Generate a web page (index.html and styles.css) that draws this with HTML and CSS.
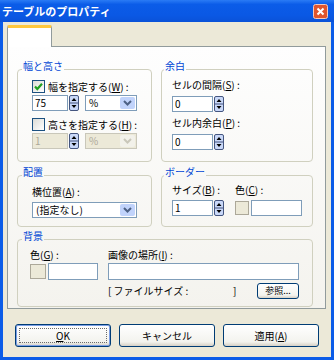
FILE: index.html
```html
<!DOCTYPE html>
<html lang="ja">
<head>
    <meta charset="UTF-8">
    <title>テーブルのプロパティ</title>
    <link rel="stylesheet" href="styles.css">
</head>
<body>
    <div class="window">
        <div class="titlebar">
            <span class="title">テーブルのプロパティ</span>
            <svg class="close-btn" width="15" height="15" viewBox="0 0 15 15">
                <rect x="0.5" y="0.5" width="14" height="14" rx="2" fill="#E0552D" stroke="#F6C8B8"/>
                <path d="M4.5 4.5 L10.5 10.5 M10.5 4.5 L4.5 10.5" stroke="#fff" stroke-width="2"/>
            </svg>
        </div>

        <div class="frame">
            <div class="client">
                <div class="tabs">
                    <div class="tab"></div>
                </div>

                <div class="panel">
                    <div class="group-grid">
                        <!-- width and height -->
                        <fieldset class="group">
                            <legend>幅と高さ</legend>
                            <div class="size-body">
                                <div class="check-row">
                                    <span class="checkbox">
                                        <svg width="11" height="11" viewBox="0 0 11 11"><path d="M2 5.5 L4.3 8 L9 2.8" fill="none" stroke="#21A121" stroke-width="2.2"/></svg>
                                    </span>
                                    <span>幅を指定する(<u>W</u>) :</span>
                                </div>
                                <div class="control-row">
                                    <div class="spin-input">
                                        <span class="textbox num-w">75</span>
                                        <svg class="spin" width="10" height="16" viewBox="0 0 10 16"><rect x="0.5" y="0.5" width="9" height="15" rx="1.5" fill="#C9D8F8" stroke="#44557F"/><line x1="1" y1="8" x2="9" y2="8" stroke="#44557F"/><path d="M2.5 6 L5 3 L7.5 6Z M2.5 10 L5 13 L7.5 10Z" fill="#000"/></svg>
                                    </div>
                                    <div class="select unit-select">
                                        <span class="select-text">%</span>
                                        <span class="drop"><svg width="9" height="6" viewBox="0 0 9 6"><path d="M1 1 L4.5 4.5 L8 1" fill="none" stroke="#4D6185" stroke-width="2"/></svg></span>
                                    </div>
                                </div>
                                <div class="check-row second">
                                    <span class="checkbox"></span>
                                    <span>高さを指定する(<u>H</u>) :</span>
                                </div>
                                <div class="control-row disabled">
                                    <div class="spin-input">
                                        <span class="textbox num-w">1</span>
                                        <svg class="spin" width="10" height="16" viewBox="0 0 10 16"><rect x="0.5" y="0.5" width="9" height="15" rx="1.5" fill="#C9D8F8" stroke="#44557F"/><line x1="1" y1="8" x2="9" y2="8" stroke="#44557F"/><path d="M2.5 6 L5 3 L7.5 6Z M2.5 10 L5 13 L7.5 10Z" fill="#000"/></svg>
                                    </div>
                                    <div class="select unit-select">
                                        <span class="select-text">%</span>
                                        <span class="drop"><svg width="9" height="6" viewBox="0 0 9 6"><path d="M1 1 L4.5 4.5 L8 1" fill="none" stroke="#C9C7BA" stroke-width="2"/></svg></span>
                                    </div>
                                </div>
                            </div>
                        </fieldset>

                        <!-- margins -->
                        <fieldset class="group right">
                            <legend>余白</legend>
                            <div class="margin-body">
                                <div class="field-label first">セルの間隔(<u>S</u>) :</div>
                                <div class="spin-input">
                                    <span class="textbox num-m">0</span>
                                    <svg class="spin" width="10" height="16" viewBox="0 0 10 16"><rect x="0.5" y="0.5" width="9" height="15" rx="1.5" fill="#C9D8F8" stroke="#44557F"/><line x1="1" y1="8" x2="9" y2="8" stroke="#44557F"/><path d="M2.5 6 L5 3 L7.5 6Z M2.5 10 L5 13 L7.5 10Z" fill="#000"/></svg>
                                </div>
                                <div class="field-label">セル内余白(<u>P</u>) :</div>
                                <div class="spin-input">
                                    <span class="textbox num-m">0</span>
                                    <svg class="spin" width="10" height="16" viewBox="0 0 10 16"><rect x="0.5" y="0.5" width="9" height="15" rx="1.5" fill="#C9D8F8" stroke="#44557F"/><line x1="1" y1="8" x2="9" y2="8" stroke="#44557F"/><path d="M2.5 6 L5 3 L7.5 6Z M2.5 10 L5 13 L7.5 10Z" fill="#000"/></svg>
                                </div>
                            </div>
                        </fieldset>

                        <!-- alignment -->
                        <fieldset class="group">
                            <legend>配置</legend>
                            <div class="align-body">
                                <div class="field-label">横位置(<u>A</u>) :</div>
                                <div class="select align-select">
                                    <span class="select-text">(指定なし)</span>
                                    <span class="drop"><svg width="9" height="6" viewBox="0 0 9 6"><path d="M1 1 L4.5 4.5 L8 1" fill="none" stroke="#4D6185" stroke-width="2"/></svg></span>
                                </div>
                            </div>
                        </fieldset>

                        <!-- border -->
                        <fieldset class="group right">
                            <legend>ボーダー</legend>
                            <div class="border-body">
                                <div class="col">
                                    <div class="field-label">サイズ(<u>B</u>) :</div>
                                    <div class="spin-input">
                                        <span class="textbox num-m">1</span>
                                        <svg class="spin" width="10" height="16" viewBox="0 0 10 16"><rect x="0.5" y="0.5" width="9" height="15" rx="1.5" fill="#C9D8F8" stroke="#44557F"/><line x1="1" y1="8" x2="9" y2="8" stroke="#44557F"/><path d="M2.5 6 L5 3 L7.5 6Z M2.5 10 L5 13 L7.5 10Z" fill="#000"/></svg>
                                    </div>
                                </div>
                                <div class="col color-col">
                                    <div class="field-label">色(<u>C</u>) :</div>
                                    <div class="color-row">
                                        <span class="swatch"></span>
                                        <span class="textbox color-text"></span>
                                    </div>
                                </div>
                            </div>
                        </fieldset>
                    </div>

                    <!-- background -->
                    <fieldset class="group bg-group">
                        <legend>背景</legend>
                        <div class="bg-body">
                            <div class="col bg-color">
                                <div class="field-label">色(<u>G</u>) :</div>
                                <div class="color-row">
                                    <span class="swatch big"></span>
                                    <span class="textbox bg-text"></span>
                                </div>
                            </div>
                            <div class="col bg-image">
                                <div class="field-label">画像の場所(<u>I</u>) :</div>
                                <span class="textbox image-path"></span>
                                <div class="file-row">
                                    <span class="file-size">[ ファイルサイズ :</span>
                                    <span>]</span>
                                    <span class="btn small-btn">参照...</span>
                                </div>
                            </div>
                        </div>
                    </fieldset>
                </div>

                <div class="buttons">
                    <span class="btn default"><span class="focus"><u>O</u>K</span></span>
                    <span class="btn">キャンセル</span>
                    <span class="btn">適用(<u>A</u>)</span>
                </div>
            </div>
        </div>
    </div>
</body>
</html>
```

FILE: styles.css
```css
* {
    margin: 0;
    padding: 0;
    box-sizing: border-box;
}

body {
    width: 334px;
    height: 360px;
    overflow: hidden;
    font-family: "Noto Sans CJK JP", "Liberation Sans", sans-serif;
    font-size: 10px;
    line-height: 12px;
    color: #000;
    background: #0B5CE8;
}

u {
    text-decoration: underline;
    text-underline-offset: 1px;
}

.window {
    width: 334px;
    height: 360px;
    display: flex;
    flex-direction: column;
}

/* title bar */
.titlebar {
    height: 22px;
    display: flex;
    align-items: center;
    justify-content: space-between;
    padding: 0 6px 0 2px;
    background: linear-gradient(#2A7BF5 0%, #0B5CE8 20%, #0A58E4 70%, #0A52D8 100%);
}

.title {
    color: #fff;
    font-size: 11px;
    font-weight: bold;
    line-height: 14px;
}

.frame {
    flex: 1;
    padding: 0 3px 3px;
    background: #0B5CE8;
}

.client {
    height: 335px;
    display: flex;
    flex-direction: column;
    padding: 3px 5px 10px 4px;
    background: #ECE9D8;
}

/* tab */
.tabs {
    display: flex;
    height: 21px;
}

.tab {
    position: relative;
    z-index: 1;
    width: 45px;
    height: 22px;
    background: #fff;
    border: 1px solid #919B9C;
    border-top: 3px solid #FFC73C;
    border-bottom: none;
    border-radius: 2px 2px 0 0;
}

.panel {
    height: 263px;
    border: 1px solid #919B9C;
    background: linear-gradient(#FEFEFE, #F4F3EE);
    padding: 13px 12px 0 9px;
}

.group-grid {
    display: grid;
    grid-template-columns: 135px 152px;
    column-gap: 9px;
    row-gap: 4px;
}

/* group boxes */
.group {
    border: 1px solid #D0D0BF;
    border-radius: 4px;
    padding: 0 4px;
    min-width: 0;
}

.group.right {
    padding: 0 4px 0 2px;
}

.group legend {
    color: #0046D5;
    line-height: 12px;
    padding: 0 1px 6px;
}

.size-body {
    padding: 0 0 12px 10px;
}

.margin-body {
    padding: 0 0 0 8px;
}

.align-body {
    padding: 0 0 8px 10px;
}

.border-body {
    display: flex;
    padding: 0 0 0 8px;
}

.bg-group {
    margin-top: 3px;
}

.bg-body {
    display: flex;
    gap: 10px;
    padding: 0 0 7px 8px;
}

/* rows */
.check-row {
    display: flex;
    align-items: center;
    gap: 3px;
    height: 13px;
    margin-top: 2px;
}

.check-row.second {
    margin-top: 7px;
}

.control-row {
    display: flex;
    gap: 6px;
    margin-top: 2px;
}

.field-label {
    height: 12px;
    white-space: nowrap;
}

.margin-body .field-label {
    margin-top: 5px;
}

.margin-body .field-label.first {
    margin-top: 1px;
}

.margin-body .spin-input {
    margin-top: 5px;
}

.align-body .field-label {
    margin-top: 2px;
}

.border-body .spin-input,
.border-body .color-row {
    margin-top: 4px;
}

.color-col {
    margin-left: 11px;
}

.bg-body .field-label {
    margin-top: 1px;
}

.bg-body .color-row,
.bg-body .image-path {
    margin-top: 2px;
}

/* controls */
.checkbox {
    width: 13px;
    height: 13px;
    display: flex;
    align-items: center;
    justify-content: center;
    border: 1px solid #1C5180;
    background: linear-gradient(135deg, #DCDCD7, #FFFFFF);
}

.textbox {
    display: block;
    height: 16px;
    border: 1px solid #7F9DB9;
    background: #fff;
    padding-left: 2px;
    line-height: 14px;
}

.spin-input {
    display: flex;
    gap: 1px;
}

.num-w {
    width: 36px;
}

.num-m {
    width: 41px;
}

.select {
    display: flex;
    align-items: center;
    height: 16px;
    border: 1px solid #7F9DB9;
    background: #fff;
    padding: 0 1px 0 0;
}

.unit-select {
    width: 52px;
}

.align-select {
    width: 105px;
    margin-top: 4px;
}

.select-text {
    flex: 1;
    padding-left: 3px;
    line-height: 14px;
}

.drop {
    width: 15px;
    height: 12px;
    display: flex;
    align-items: center;
    justify-content: center;
    background: #C1D3FB;
    border-radius: 2px;
}

.disabled .textbox,
.disabled .select {
    background: #ECE9D8;
    color: #ACA899;
    border-color: #C9C7BA;
}

.disabled .drop {
    background: #F2F1EA;
}

.color-row {
    display: flex;
    align-items: center;
    gap: 2px;
}

.swatch {
    width: 14px;
    height: 14px;
    border: 1px solid #ACA899;
    background: #ECE9D8;
}

.swatch.big {
    width: 16px;
    height: 15px;
}

.color-text {
    width: 51px;
}

.bg-color {
    width: 68px;
}

.bg-text {
    width: 50px;
    height: 17px;
}

.bg-image {
    width: 191px;
}

.image-path {
    width: 191px;
    height: 17px;
}

.file-row {
    display: flex;
    align-items: center;
    margin-top: 3px;
}

.file-size {
    width: 125px;
}

/* buttons */
.btn {
    display: flex;
    align-items: center;
    justify-content: center;
    width: 96px;
    height: 23px;
    border: 1px solid #003C74;
    border-radius: 3px;
    background: linear-gradient(#FFFFFF, #F3F3EE 80%, #D6D0C5);
    white-space: nowrap;
}

.btn.default {
    box-shadow: inset 0 0 0 1px #7C9FE6;
    padding: 3px;
}

.focus {
    flex: 1;
    align-self: stretch;
    display: flex;
    align-items: center;
    justify-content: center;
    border: 1px dotted #6B6B6B;
}

.small-btn {
    width: 42px;
    height: 16px;
    margin-left: auto;
    font-size: 9px;
}

.buttons {
    display: flex;
    gap: 8px;
    margin: 15px 0 0 8px;
}
```
